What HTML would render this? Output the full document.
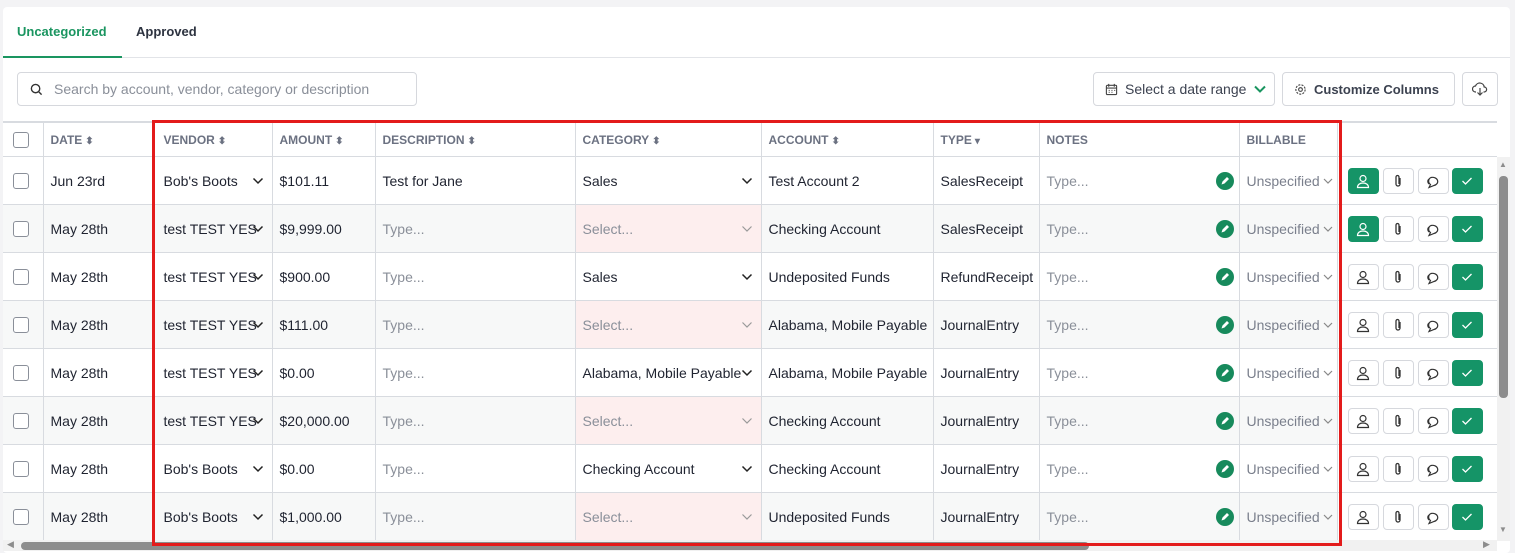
<!DOCTYPE html>
<html><head><meta charset="utf-8"><style>
*{box-sizing:border-box;margin:0;padding:0}
body{width:1515px;height:553px;background:#f3f3f5;font-family:"Liberation Sans",Arial,sans-serif;position:relative;overflow:hidden;color:#1f2330}
.card{position:absolute;left:3px;top:7px;width:1507px;height:546px;background:#fff;border-radius:4px}
.a{position:absolute}
.tab{position:absolute;top:24px;font-size:13px;font-weight:bold}
.btn{position:absolute;top:72px;height:34px;border:1px solid #d6d8dd;border-radius:4px;background:#fff;font-size:14px;color:#3c4250;display:flex;align-items:center}
table{position:absolute;left:3px;top:122px;width:1494px;border-collapse:collapse;table-layout:fixed;font-size:14px}
td,th{border:1px solid #d8dbe0;height:48px;padding:0 7px;white-space:nowrap;overflow:hidden;position:relative}
th{height:34px;font-size:12px;font-weight:bold;color:#6b7181;text-align:left;background:#fff}
tr:nth-child(even) td{background:#f7f8f8}
td:first-child,th:first-child{border-left:none}
td:last-child,th:last-child{border-right:none;border-bottom:1px solid #d8dbe0}
.cb{display:inline-block;width:16px;height:16px;border:1px solid #8a8f99;border-radius:3px;margin-left:3px;vertical-align:middle;background:#fff}
.ph{color:#8a8f99}
.pink{background:#fdeeee!important}
.chev{position:absolute;right:8px;top:50%;margin-top:-4px;width:12px;height:8px}
.s{display:inline-block;margin-left:3px;font-size:10px;vertical-align:0px}
.pen{position:absolute;right:5px;top:15px;width:18px;height:18px;border-radius:50%;background:#178a5c}
.ab{position:absolute;top:11px;width:31px;height:26px;border:1px solid #d6d8dd;border-radius:4px;background:#fff;display:flex;align-items:center;justify-content:center}
.g{background:#159467;border-color:#159467}
</style></head><body>
<div class="card"></div>
<div class="tab" style="left:17px;color:#1a9560">Uncategorized</div>
<div class="tab" style="left:136px;color:#2d3340">Approved</div>
<div class="a" style="left:3px;top:57px;width:1507px;height:1px;background:#e2e4e8"></div>
<div class="a" style="left:3px;top:56px;width:119px;height:2px;background:#1a9560"></div>
<div class="btn" style="left:17px;width:400px;color:#8a8f99">
<svg style="margin:0 11px 0 12px" width="13" height="13" viewBox="0 0 14 14"><circle cx="6" cy="6" r="4.5" fill="none" stroke="#333" stroke-width="1.5"/><path d="M9.5 9.5l3 3" stroke="#333" stroke-width="1.5"/></svg>Search by account, vendor, category or description</div>
<div class="btn" style="left:1093px;width:182px"><svg style="margin:0 7px 0 11px" width="13" height="13" viewBox="0 0 14 14"><rect x="1.5" y="2.5" width="11" height="10" rx="1" fill="none" stroke="#444" stroke-width="1.2"/><path d="M1.5 5.5h11M4 1v3M10 1v3M4 8h1M7 8h1M10 8h1M4 10h1M7 10h1" stroke="#444" stroke-width="1.2"/></svg>Select a date range<svg style="margin-left:8px" width="12" height="8" viewBox="0 0 12 8"><path d="M1 1.5l5 5 5-5" fill="none" stroke="#1a9560" stroke-width="2"/></svg></div>
<div class="btn" style="left:1282px;width:173px;font-weight:bold;font-size:13px"><svg style="margin:0 7px 0 11px" width="13" height="13" viewBox="0 0 14 14"><circle cx="7" cy="7" r="2" fill="none" stroke="#444" stroke-width="1.2"/><circle cx="7" cy="7" r="5" fill="none" stroke="#444" stroke-width="1.2" stroke-dasharray="2.2 1.3"/></svg>Customize Columns</div>
<div class="btn" style="left:1462px;width:36px;justify-content:center"><svg width="16" height="14" viewBox="0 0 16 14"><path d="M4 10H3.5a3 3 0 0 1 0-6 4.5 4.5 0 0 1 8.7 1A2.5 2.5 0 0 1 12 10h-0.5M8 6v7M5.5 10.5L8 13l2.5-2.5" fill="none" stroke="#444" stroke-width="1.2"/></svg></div>
<div class="a" style="left:3px;top:121px;width:1494px;height:1px;background:#d8dbe0"></div>
<table>
<colgroup><col style="width:40px"><col style="width:110px"><col style="width:119px"><col style="width:103px"><col style="width:200px"><col style="width:186px"><col style="width:172px"><col style="width:106px"><col style="width:200px"><col style="width:98px"><col style="width:160px"></colgroup>
<tr><th><span class="cb"></span></th><th>DATE<span class="s">⬍</span></th><th style="padding-left:10px">VENDOR<span class="s">⬍</span></th><th>AMOUNT<span class="s">⬍</span></th><th>DESCRIPTION<span class="s">⬍</span></th><th>CATEGORY<span class="s">⬍</span></th><th>ACCOUNT<span class="s">⬍</span></th><th>TYPE<span class="s">▾</span></th><th>NOTES</th><th>BILLABLE</th><th></th></tr>
<tbody id="tb"></tbody>
</table>
<div class="a" style="left:1497px;top:157px;width:13px;height:384px;background:#f1f1f1"></div>
<div class="a" style="left:1499px;top:176px;width:9px;height:222px;background:#8c8c8c;border-radius:4px"></div>
<div class="a" style="left:1499px;top:160px;font-size:8px;color:#8c8c8c">▲</div>
<div class="a" style="left:1499px;top:525px;font-size:8px;color:#8c8c8c">▼</div>
<div class="a" style="left:3px;top:540px;width:1494px;height:11px;background:#f1f1f1"></div>
<div class="a" style="left:21px;top:542px;width:1068px;height:8px;background:#8c8c8c;border-radius:4px"></div>
<div class="a" style="left:7px;top:539px;font-size:9px;color:#8c8c8c">◀</div>
<div class="a" style="left:1483px;top:539px;font-size:9px;color:#8c8c8c">▶</div>
<div class="a" style="left:152px;top:120px;width:1190px;height:426px;border:3px solid #e31b1b"></div>
<script>
var R=[["Jun 23rd","Bob's Boots","$101.11","","Sales","Test Account 2","SalesReceipt",1],
["May 28th","test TEST YES","$9,999.00","","","Checking Account","SalesReceipt",1],
["May 28th","test TEST YES","$900.00","","Sales","Undeposited Funds","RefundReceipt",0],
["May 28th","test TEST YES","$111.00","","","Alabama, Mobile Payable","JournalEntry",0],
["May 28th","test TEST YES","$0.00","","Alabama, Mobile Payable","Alabama, Mobile Payable","JournalEntry",0],
["May 28th","test TEST YES","$20,000.00","","","Checking Account","JournalEntry",0],
["May 28th","Bob's Boots","$0.00","","Checking Account","Checking Account","JournalEntry",0],
["May 28th","Bob's Boots","$1,000.00","","","Undeposited Funds","JournalEntry",0]];
R[0][3]="Test for Jane";
function ch(c,w){return '<svg class="chev" viewBox="0 0 12 8"><path d="M1.5 1.5l4.5 4.5 4.5-4.5" fill="none" stroke="'+c+'" stroke-width="'+w+'"/></svg>'}
var pen='<span class="pen"><svg width="18" height="18" viewBox="0 0 18 18"><path d="M5.5 12.5l1-3 4.5-4.5 2 2-4.5 4.5z" fill="#fff"/></svg></span>';
var per=function(c){return '<svg width="14" height="15" viewBox="0 0 14 15"><circle cx="7" cy="4.5" r="3" fill="none" stroke="'+c+'" stroke-width="1.2"/><path d="M1.5 13.5c0-3 2.5-4.5 5.5-4.5s5.5 1.5 5.5 4.5z" fill="none" stroke="'+c+'" stroke-width="1.2"/></svg>'};
var clip='<svg width="10" height="15" viewBox="0 0 10 15"><path d="M7 4v6a2 2 0 0 1-4 0V3a1.5 1.5 0 0 1 3 0v7" fill="none" stroke="#333" stroke-width="1.3"/></svg>';
var chat='<svg width="17" height="15" viewBox="0 0 17 15"><path d="M6 3.5a5 4 0 1 1 3 8l-5 2 1.5-3A4 4 0 0 1 6 3.5z" fill="none" stroke="#333" stroke-width="1.2"/><path d="M4 5a4 3.5 0 0 0 0 5" fill="none" stroke="#333" stroke-width="1.2"/></svg>';
var chk='<svg width="12" height="10" viewBox="0 0 12 10"><path d="M1.5 5l3 3 6-6" fill="none" stroke="#fff" stroke-width="1.3"/></svg>';
var h='';R.forEach(function(r){
h+='<tr><td><span class="cb"></span></td><td>'+r[0]+'</td><td style="padding-left:10px">'+r[1]+ch('#222',1.5)+'</td><td>'+r[2]+'</td>'+
(r[3]?'<td>'+r[3]+'</td>':'<td class="ph">Type...</td>')+
(r[4]?'<td>'+r[4]+ch('#222',1.5)+'</td>':'<td class="pink ph">Select...'+ch('#999',1.2)+'</td>')+
'<td>'+r[5]+'</td><td>'+r[6]+'</td><td class="ph">Type...'+pen+'</td><td style="color:#7a7f8c">Unspecified<svg class="chev" style="right:3px" viewBox="0 0 12 8"><path d="M2 2l4 4 4-4" fill="none" stroke="#888" stroke-width="1.2"/></svg></td>'+
'<td style="background:#fff"><span class="ab'+(r[7]?' g':'')+'" style="left:10px">'+per(r[7]?'#fff':'#333')+'</span><span class="ab" style="left:45px">'+clip+'</span><span class="ab" style="left:80px">'+chat+'</span><span class="ab g" style="left:114px">'+chk+'</span></td></tr>';});
document.getElementById('tb').innerHTML=h;
</script>
</body></html>
